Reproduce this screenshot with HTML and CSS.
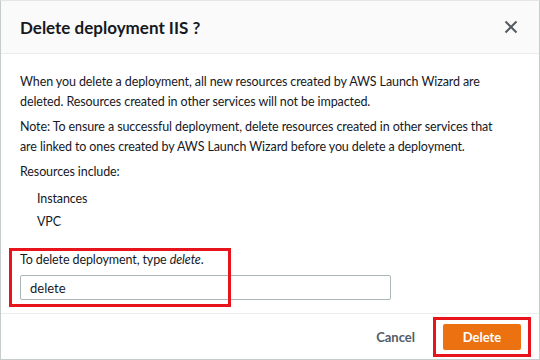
FILE: index.html
```html
<!DOCTYPE html>
<html lang="en">
<head>
  <meta charset="UTF-8">
  <meta name="viewport" content="width=device-width, initial-scale=1.0">
  <title>Delete deployment</title>
  <link rel="stylesheet" href="styles.css">
</head>
<body>

<div class="modal">
  <div class="modal-header">
    <h2>Delete deployment IIS ?</h2>
    <button class="close" aria-label="Close">
      <svg width="14" height="14" viewBox="0 0 14 14">
        <path d="M1.5 1.5 L12.5 12.5 M12.5 1.5 L1.5 12.5" stroke="#545b64" stroke-width="2" fill="none"/>
      </svg>
    </button>
  </div>

  <div class="modal-body">
    <p>When you delete a deployment, all new resources created by AWS Launch Wizard are deleted. Resources created in other services will not be impacted.</p>
    <p>Note: To ensure a successful deployment, delete resources created in other services that are linked to ones created by AWS Launch Wizard before you delete a deployment.</p>
    <p>Resources include:</p>
    <ul class="resources">
      <li>Instances</li>
      <li>VPC</li>
    </ul>
    <div class="confirm">
      <label for="confirm">To delete deployment, type <em>delete</em>.</label>
      <input type="text" id="confirm" value="delete">
    </div>
  </div>

  <div class="modal-footer">
    <button class="btn-link">Cancel</button>
    <button class="btn-primary">Delete</button>
  </div>

  <!-- Annotation boxes -->
  <div class="mark mark-field"></div>
  <div class="mark mark-button"></div>
</div>

</body>
</html>
```

FILE: styles.css
```css
* {
  box-sizing: border-box;
}
body {
  margin: 0;
  font-family: Lato, "Noto Sans", Arial, sans-serif;
  color: #16191f;
  background: #fff;
}
.modal {
  position: relative;
  width: 540px;
  height: 360px;
  border: 1px solid #c6cbcb;
  border-top-color: #e4e6e6;
  background: #fff;
  display: flex;
  flex-direction: column;
  overflow: hidden;
}
.modal-header {
  flex-shrink: 0;
  height: 53px;
  background: #fafafa;
  border-bottom: 1px solid #eaeded;
  display: flex;
  align-items: center;
  justify-content: space-between;
  padding: 0 21px 0 19px;
}
.modal-header h2 {
  margin: 0;
  font-size: 17px;
  font-weight: 700;
}
.close {
  background: none;
  border: none;
  padding: 0;
  width: 14px;
  height: 14px;
  display: flex;
  cursor: pointer;
}
.modal-body {
  flex: 1;
  padding: 18px 36px 0 19px;
  font-size: 12.5px;
  letter-spacing: -0.1px;
  line-height: 20px;
}
.modal-body p {
  margin: 0 0 5px;
}
.resources {
  list-style: none;
  margin: 0;
  padding: 0 0 0 17px;
}
.resources li {
  line-height: 23px;
}
.confirm {
  margin-top: 17px;
}
.confirm label {
  display: block;
  margin-bottom: 5px;
}
.confirm input {
  width: 371px;
  height: 25px;
  border: 1px solid #aab7b8;
  border-radius: 2px;
  padding: 0 9px;
  font: inherit;
  font-size: 13px;
  color: #16191f;
}
.modal-footer {
  flex-shrink: 0;
  height: 46px;
  border-top: 1px solid #eaeded;
  display: flex;
  align-items: center;
  justify-content: flex-end;
  gap: 24px;
  padding: 0 18px 0 0;
}
.btn-link {
  background: none;
  border: none;
  font: inherit;
  font-size: 13px;
  font-weight: 700;
  color: #545b64;
  padding: 4px;
}
.btn-primary {
  background: #ec7211;
  color: #fff;
  border: none;
  border-radius: 2px;
  width: 78px;
  height: 26px;
  font: inherit;
  font-size: 13px;
  font-weight: 700;
}
.mark {
  position: absolute;
  border: 3px solid #e8141c;
}
.mark-field {
  left: 8px;
  top: 247px;
  width: 222px;
  height: 59px;
}
.mark-button {
  left: 432px;
  top: 316px;
  width: 98px;
  height: 40px;
}
```
